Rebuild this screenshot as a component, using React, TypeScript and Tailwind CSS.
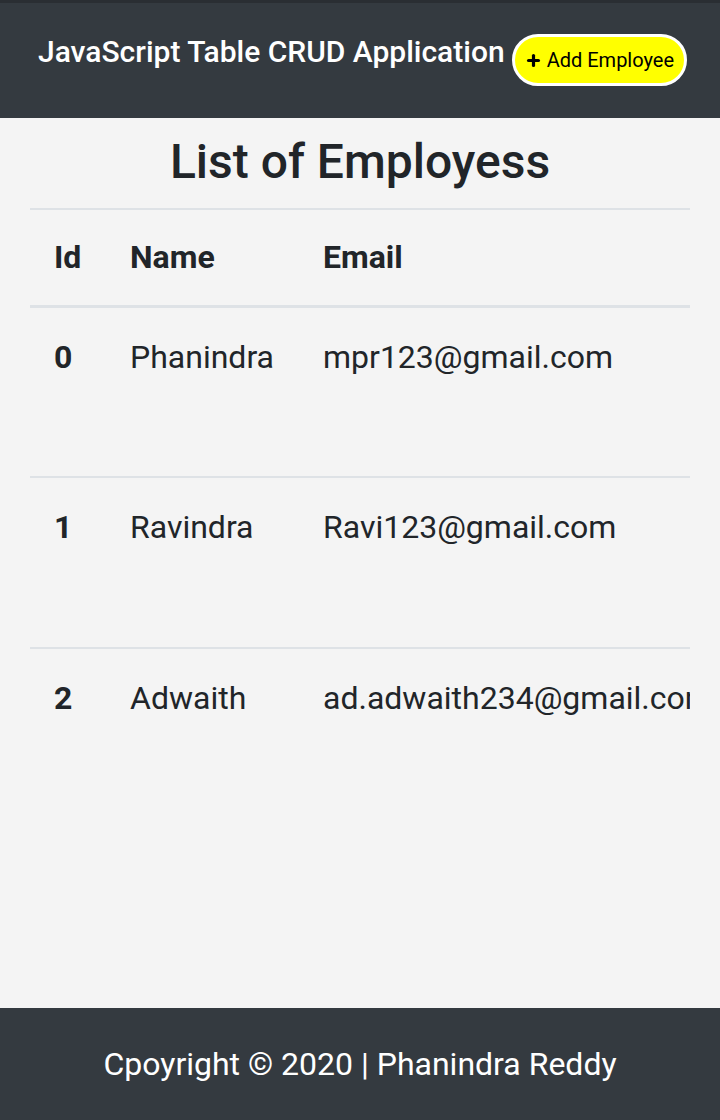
import { Plus } from "lucide-react";

interface Employee {
  id: number;
  name: string;
  email: string;
}

const employees: Employee[] = [
  { id: 0, name: "Phanindra", email: "mpr123@gmail.com" },
  { id: 1, name: "Ravindra", email: "Ravi123@gmail.com" },
  { id: 2, name: "Adwaith", email: "ad.adwaith234@gmail.com" },
];

export default function App() {
  return (
    <div className="min-h-[1120px] flex flex-col bg-[#f4f4f4] text-[#212529] font-['Roboto',sans-serif]">
      <header className="h-[118px] bg-[#343a40] border-t-[3px] border-[#2a2e33] flex items-start pt-[29px] pl-[38px]">
        <h1 className="text-white text-[30px] font-medium leading-[40px] whitespace-nowrap">
          JavaScript Table CRUD Application
        </h1>

        <button className="ml-[7px] mt-[2px] h-[52px] px-[10px] rounded-full bg-[#ffff00] border-[3px] border-white flex items-center gap-[5px] text-black text-[20px] leading-none whitespace-nowrap shrink-0">
          <Plus className="w-[17px] h-[17px]" strokeWidth={4.5} />
          Add Employee
        </button>
      </header>

      <main className="flex-1 px-[30px]">
        <h2 className="text-center text-[48px] font-medium leading-[56px] pt-[16px] pb-[18px]">
          List of Employess
        </h2>

        <div className="w-[660px] overflow-hidden">
          <table className="w-[800px] table-fixed text-left text-[32px] border-collapse">
            <thead>
              <tr className="border-t-2 border-b-[3px] border-[#dee2e6]">
                <th className="w-[100px] pl-[24px] h-[97px] font-bold">Id</th>
                <th className="w-[193px] font-bold">Name</th>
                <th className="font-bold">Email</th>
              </tr>
            </thead>

            <tbody>
              {employees.map((emp, i) => (
                <tr
                  key={emp.id}
                  className={
                    i > 0
                      ? "border-t-2 border-[#dee2e6]"
                      : ""
                  }
                >
                  <td className="pl-[24px] align-top pt-[25px] h-[171px] font-bold">
                    {emp.id}
                  </td>
                  <td className="align-top pt-[25px]">
                    {emp.name}
                  </td>
                  <td className="align-top pt-[25px] whitespace-nowrap">
                    {emp.email}
                  </td>
                </tr>
              ))}
            </tbody>
          </table>
        </div>
      </main>

      <footer className="h-[112px] bg-[#343a40] flex items-center justify-center">
        <p className="text-white text-[32px] leading-none">
          Cpoyright © 2020 | Phanindra Reddy
        </p>
      </footer>
    </div>
  );
}
